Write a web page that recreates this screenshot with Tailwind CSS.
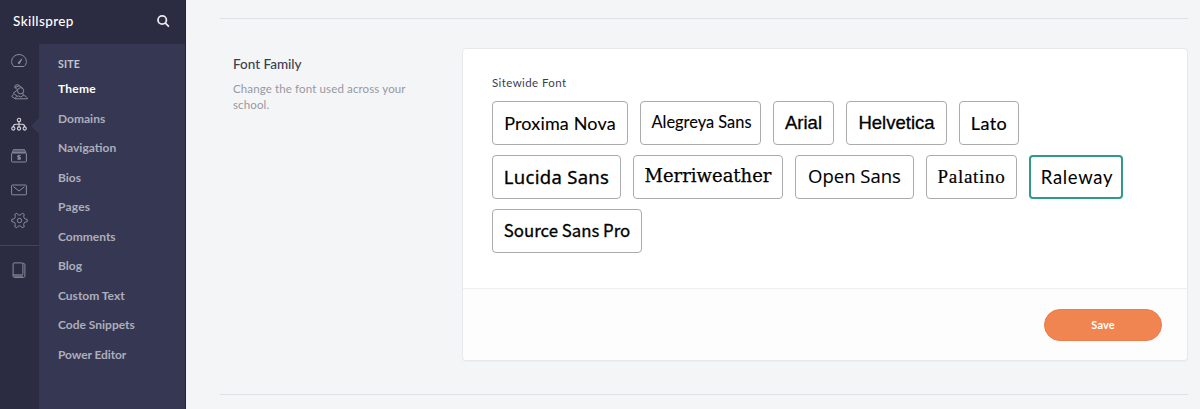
<!DOCTYPE html>
<html lang="en">
<head>
<meta charset="utf-8">
<title>Skillsprep – Theme</title>
<script src="https://cdn.jsdelivr.net/npm/@tailwindcss/browser@4"></script>
</head>
<body class="flex h-[409px] overflow-hidden bg-[#f4f5f7] font-['Lato',sans-serif]">
<aside class="flex w-[186px] shrink-0 flex-col border-r border-[#23223a] bg-[#2b2c41]">
  <header class="flex h-11 shrink-0 items-center justify-between pr-[15px] pb-[2px] pl-[13px]">
    <span class="text-[13.5px] leading-5 font-medium tracking-[0.4px] text-white">Skillsprep</span>
    <svg class="size-[14px]" viewBox="0 0 14 14" fill="none" stroke="#e8e8ee" stroke-width="1.8" stroke-linecap="round"><circle cx="6.2" cy="6" r="4.2"/><path d="M9.4 9.2l3 3"/></svg>
  </header>
  <div class="flex min-h-0 flex-1">
    <nav class="relative flex w-[39px] shrink-0 flex-col items-center pr-px text-[#8b8c9c]">
      <svg class="mt-[8px] size-4 shrink-0" viewBox="0 0 16 16" fill="none" stroke="currentColor"><path d="M3 14.500C1.300 13.200.6 11.300.6 9.500a7.400 7 0 0 1 14.800 0c0 1.800-.7 3.700-2.400 5z"/><path d="M6.900 11l4-4.200-2.500 5z" fill="currentColor" stroke-width=".9"/></svg>
      <svg class="mt-[16px] size-[17px] shrink-0" viewBox="0 0 17 17" fill="none" stroke="currentColor"><path d="M4.500 1.200L7 .7l4.600 3.400M4.500 1.200L3.600 3.400l2.800 2.200M4.100 3.700l4.400-2.200"/><circle cx="9.600" cy="6.800" r="3.100"/><path d="M6.500 6L2.300 9.200l3.800 3M11.800 9.200l.6 2.200c2 .4 3.800 1.400 4 3.400H4.200L.8 12.600c.1-1 .7-1.700 1.700-2M4.200 14.800c.5-1.900 1.800-2.700 3.400-2.800l2.200 1 2.600-1.600"/></svg>
      <svg class="mt-[16px] size-4 shrink-0" viewBox="0 0 16 16" fill="none" stroke="#d5d5de" stroke-width="1.100"><circle cx="8" cy="3" r="1.700"/><circle cx="2.300" cy="11.500" r="1.600"/><circle cx="8" cy="11.500" r="1.600"/><circle cx="13.700" cy="11.500" r="1.600"/><path d="M8 4.700v5.200M2.300 9.900c0-2 1-2.700 2.700-2.700h6c1.700 0 2.700.7 2.700 2.700"/></svg>
      <svg class="mt-[15px] size-4 shrink-0" viewBox="0 0 16 16" fill="none" stroke="currentColor"><rect x=".6" y="5" width="14.800" height="9" rx=".8"/><path d="M2.500 1.500h11l1.500 3H1z" fill="currentColor" fill-opacity=".55" stroke-width=".7"/><path d="M9.500 8C9.200 7.300 6.600 7.200 6.600 8.400c0 1.300 3 .7 3 2 0 1.200-2.700 1.200-3.200.2M8 6.800v5.200" stroke-width="1.100"/></svg>
      <svg class="mt-[17.5px] size-4 shrink-0" viewBox="0 0 16 16" fill="none" stroke="currentColor"><rect x=".6" y="3" width="14.800" height="9.800" rx=".7"/><path d="M2.500 4.700L8 9l5.500-4.300"/></svg>
      <svg class="mt-[14px] size-[17px] shrink-0" viewBox="0 0 17 17" fill="none" stroke="currentColor" stroke-linejoin="round"><path d="M5.800 1.200Q7 3.200 8.500 3.200T11.200 1.200L13.300 2.400Q12.300 4.500 13 5.900T16.200 7.300V9.700Q13.800 9.800 13 11.100T13.300 14.600L11.200 15.800Q10 13.800 8.500 13.800T5.800 15.800L3.700 14.600Q4.700 12.500 4 11.100T.8 9.700V7.300Q3.200 7.200 4 5.900T3.700 2.400Z"/><circle cx="8.500" cy="8.500" r="2.200"/></svg>
      <div class="mt-[16.5px] -mr-px h-px w-[39px] shrink-0 bg-[#45454f]"></div>
      <svg class="mt-[16px] size-4 shrink-0" viewBox="0 0 16 16" fill="none" stroke="currentColor"><rect x="2.100" y=".9" width="9.800" height="12" rx="1"/><path d="M2.100 12v2.200c0 .8.400 1.200 1.200 1.200h9c1 0 1.600-.5 1.600-1.400V2.500c0-.7-.8-1.200-2-1.200M3 14.100h9"/></svg>
      <div class="absolute top-[74px] right-0 h-4 w-2 bg-[#363853] [clip-path:polygon(100%_0,100%_100%,0_50%)]"></div>
    </nav>
    <div class="flex flex-1 flex-col bg-[#363853] pl-[19px] text-[12px] font-bold text-[#adaebb]">
      <div class="mt-[12px] mb-[2px] h-4 text-[10.5px] leading-4 tracking-[0.2px] text-[#c4c4ce]">SITE</div>
      <a class="h-[29.5px] leading-[29.5px] tracking-[0.25px] text-white">Theme</a>
      <a class="h-[29.5px] leading-[29.5px]">Domains</a>
      <a class="h-[29.5px] leading-[29.5px]">Navigation</a>
      <a class="h-[29.5px] leading-[29.5px]">Bios</a>
      <a class="h-[29.5px] leading-[29.5px] tracking-[0.2px]">Pages</a>
      <a class="h-[29.5px] leading-[29.5px]">Comments</a>
      <a class="h-[29.5px] leading-[29.5px]">Blog</a>
      <a class="h-[29.5px] leading-[29.5px]">Custom Text</a>
      <a class="h-[29.5px] leading-[29.5px]">Code Snippets</a>
      <a class="h-[29.5px] leading-[29.5px] tracking-[-0.1px]">Power Editor</a>
    </div>
  </div>
</aside>
<main class="flex-1 pt-[18px] pr-3 pl-[34px]">
  <section class="flex h-[377px] border-y border-[#dfe1e5] pt-[29px]">
    <div class="w-[242px] shrink-0 pt-[6px] pl-[13px]">
      <h2 class="text-[13.5px] leading-5 font-medium text-[#3c3d50]">Font Family</h2>
      <p class="mt-[7px] w-[190px] text-[11.5px] leading-4 tracking-[0.13px] text-[#9798a0]">Change the font used across your school.</p>
    </div>
    <div class="flex h-[313px] flex-1 flex-col rounded-[4px] border border-[#e7e8ec] bg-white shadow-[0_1px_1px_rgba(0,0,0,0.03)]">
      <div class="flex-1 px-[29px] pt-[26px]">
        <div class="mb-[10px] h-4 text-[11.5px] leading-4 tracking-[0.4px] text-[#3c3d50]">Sitewide Font</div>
        <div class="flex flex-col gap-[10px] text-[18px] leading-none whitespace-nowrap text-black [-webkit-text-stroke:0.1px]">
          <div class="flex gap-3">
            <div class="flex h-11 w-[136px] items-center justify-center rounded-[4px] border border-[#a9abae] font-['Lato',sans-serif] tracking-[0.15px]"><span>Proxima Nova</span></div>
            <div class="flex h-11 w-[121px] items-center justify-center rounded-[4px] border border-[#a9abae] pb-[2px] pl-[2px] font-['Lato',sans-serif] text-[16.4px]"><span>Alegreya Sans</span></div>
            <div class="flex h-11 w-[61px] items-center justify-center rounded-[4px] border border-[#a9abae] font-['Liberation_Sans',sans-serif] text-[18.5px] [-webkit-text-stroke:0.3px]"><span>Arial</span></div>
            <div class="flex h-11 w-[101px] items-center justify-center rounded-[4px] border border-[#a9abae] font-['Liberation_Sans',sans-serif] text-[18.5px] [-webkit-text-stroke:0.3px]"><span>Helvetica</span></div>
            <div class="flex h-11 w-[60px] items-center justify-center rounded-[4px] border border-[#a9abae] font-['Lato',sans-serif] tracking-[0.4px] [-webkit-text-stroke:0.2px]"><span>Lato</span></div>
          </div>
          <div class="flex gap-3">
            <div class="flex h-11 w-[129px] items-center justify-center rounded-[4px] border border-[#a9abae] font-['Noto_Sans',sans-serif] text-[18.5px] tracking-[0.3px] [-webkit-text-stroke:0.3px]"><span>Lucida Sans</span></div>
            <div class="flex h-11 w-[150px] items-center justify-center rounded-[4px] border border-[#a9abae] pb-[2px] font-['DejaVu_Serif',serif] [-webkit-text-stroke:0.25px]"><span>Merriweather</span></div>
            <div class="flex h-11 w-[119px] items-center justify-center rounded-[4px] border border-[#a9abae] pb-px font-['Open_Sans',sans-serif] text-[18.5px]"><span>Open Sans</span></div>
            <div class="flex h-11 w-[91px] items-center justify-center rounded-[4px] border border-[#a9abae] pb-[2px] font-['Liberation_Serif',serif] text-[19px] tracking-[0.7px] [-webkit-text-stroke:0.2px]"><span>Palatino</span></div>
            <div class="flex h-11 w-[94px] items-center justify-center rounded-[4px] border-[2.5px] border-[#2f9a88] pl-[2px] font-['Lato',sans-serif] text-[18.5px] tracking-[0.7px] [-webkit-text-stroke:0px]"><span>Raleway</span></div>
          </div>
          <div class="flex">
            <div class="flex h-11 w-[150px] items-center justify-center rounded-[4px] border border-[#a9abae] pb-[2px] font-['Noto_Sans_CJK_SC',sans-serif] text-[16.8px] [-webkit-text-stroke:0.3px]"><span>Source Sans Pro</span></div>
          </div>
        </div>
      </div>
      <div class="flex h-[72px] items-center justify-end rounded-b-[4px] border-t border-[#eeeff1] bg-[#fdfdfd] pr-[25px]">
        <button class="h-8 w-[118px] rounded-full border border-[#ef7d48] bg-[#f08552] pt-px text-[11px] font-bold tracking-[0.1px] text-white">Save</button>
      </div>
    </div>
  </section>
</main>
</body>
</html>
